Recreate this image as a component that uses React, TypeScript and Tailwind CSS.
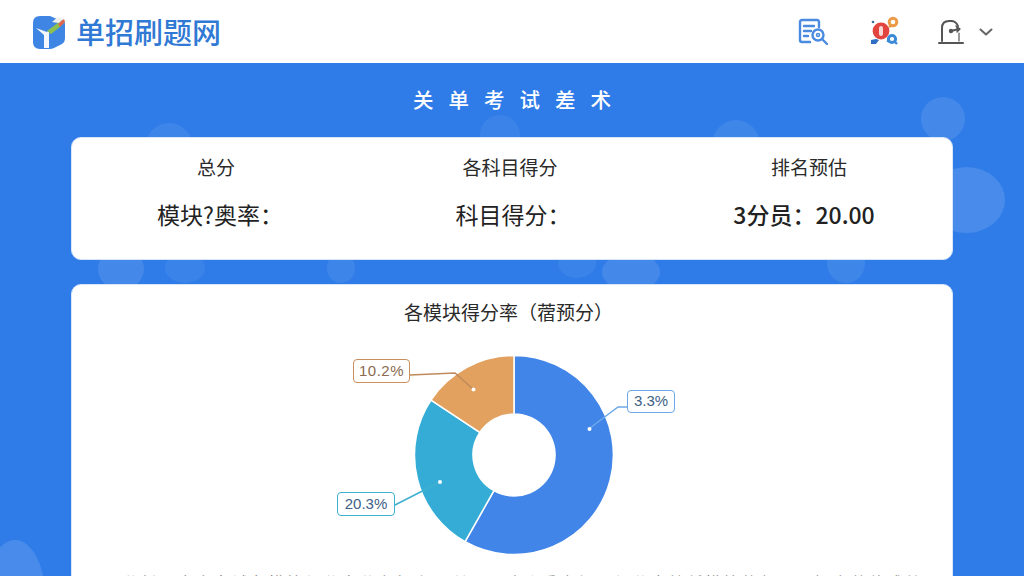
const bubbles = [
  "left-[145px] top-[60px] h-[50px] w-[48px] bg-white/[0.07]",
  "left-[480px] top-[52px] h-[40px] w-[40px] bg-white/[0.06]",
  "left-[98px] top-[185px] h-[42px] w-[46px] bg-white/[0.1]",
  "left-[165px] top-[190px] h-[30px] w-[40px] bg-white/[0.05]",
  "left-[-15px] top-[477px] h-[110px] w-[60px] bg-white/[0.12]",
  "left-[327px] top-[190px] h-[30px] w-[28px] bg-white/[0.07]",
  "left-[558px] top-[185px] h-[30px] w-[38px] bg-white/[0.05]",
  "left-[602px] top-[190px] h-[38px] w-[58px] bg-white/[0.1]",
  "left-[712px] top-[57px] h-[50px] w-[48px] bg-white/[0.08]",
  "left-[827px] top-[180px] h-[40px] w-[38px] bg-white/[0.08]",
  "left-[921px] top-[34px] h-[44px] w-[44px] bg-white/[0.1]",
  "left-[928px] top-[104px] h-[66px] w-[77px] bg-white/[0.12]",
];

const stats = [
  { title: "总分", value: "模块?奥率：", pad: "", valueClass: "pl-[8px]" },
  { title: "各科目得分", value: "科目得分：", pad: "", valueClass: "pl-[6px]" },
  { title: "排名预估", value: "3分员：20.00", pad: "pl-[6px]", valueClass: "pr-[10px] font-medium" },
];

const Logo = () => (
  <svg width="34" height="34" viewBox="0 0 34 34">
    <path d="M7 1h11l7 3 6 1q2 1 2 4v15q0 3-3 5l-8 4q-2 1-4 1h-10q-7 0-7-7V8q0-7 7-7z" fill="#3f86e4" />
    <path d="M4 13l11 4 3-3-1 5v14h-5V20z" fill="#f4f8fd" />
    <path d="M15 16l12-9 4-2-3 7-9 7z" fill="#8cc152" />
    <path d="M20 7l6-5 6 1-5 5z" fill="#f3f0ea" />
    <path d="M26 9l6-5 1 3-5 5z" fill="#e0654f" />
  </svg>
);

const DocSearchIcon = () => (
  <svg width="30" height="28" viewBox="0 0 30 28" fill="none" stroke="#4a8ae0" strokeWidth="2.4" strokeLinecap="round" strokeLinejoin="round">
    <path d="M21 9V4q0-2-2-2H4Q2 2 2 4v18q0 2 2 2h8" />
    <path d="M6 8h10M6 13h7M6 18h4" />
    <circle cx="20" cy="17" r="5.5" />
    <path d="M24.5 21.5L29 26" />
    <circle cx="20" cy="17" r="1.5" strokeWidth="1.5" />
  </svg>
);

const BadgeIcon = () => (
  <svg width="32" height="32" viewBox="0 0 32 32" fill="none">
    <circle cx="5" cy="6" r="1.3" fill="#3d6f9c" />
    <circle cx="25" cy="6" r="3.8" stroke="#ec9a45" strokeWidth="3" />
    <path d="M21 11l3-2" stroke="#ec9a45" strokeWidth="2.4" />
    <circle cx="13" cy="15" r="8.4" fill="#e2453f" />
    <rect x="11" y="10" width="4" height="10" rx="2" fill="#f7d9d6" />
    <circle cx="24" cy="23" r="3.6" stroke="#3a8ad8" strokeWidth="3" />
    <path d="M27 26l2 2M20.5 24l-1 2" stroke="#3a8ad8" strokeWidth="2.4" />
    <path d="M3 28v-4l5-1 3 1-3 4z" fill="#2f6fc4" />
  </svg>
);

const GateIcon = () => (
  <svg width="26" height="26" viewBox="0 0 26 26" fill="none" stroke="#555" strokeWidth="2" strokeLinecap="round" strokeLinejoin="round">
    <path d="M4 22V9q0-7 7-7h2q5 0 7 5" />
    <path d="M1 24h24" />
    <path d="M13 12l8-2" />
    <path d="M18 7l4 3-3 3" fill="#555" strokeWidth="1.4" />
    <path d="M21 14v8" strokeWidth="1.2" />
    <circle cx="13" cy="12" r="1.2" fill="#555" />
  </svg>
);

const Donut = () => (
  <svg width="360" height="210" viewBox="332 350 360 210" fill="none">
    <path d="M514 355.5A99.5 99.5 0 1 1 465.1 541.7L493.9 490.7A41 41 0 1 0 514 414Z" fill="#4285e8" stroke="#fff" strokeWidth="1.5" />
    <path d="M465.1 541.7A99.5 99.5 0 0 1 431 400.1L479.8 432.4A41 41 0 0 0 493.9 490.7Z" fill="#34acd6" stroke="#fff" strokeWidth="1.5" />
    <path d="M431 400.1A99.5 99.5 0 0 1 514 355.5L514 414A41 41 0 0 0 479.8 432.4Z" fill="#e2a15f" stroke="#fff" strokeWidth="1.5" />
    <path d="M410 375l45-2 18 16" stroke="#c08a5a" strokeWidth="1.5" />
    <path d="M627 407h-9l-28 21" stroke="#6ea8ea" strokeWidth="1.5" />
    <path d="M395 505l45-23" stroke="#3fb0d0" strokeWidth="1.5" />
    <circle cx="473.5" cy="389.5" r="2" fill="#fff" />
    <circle cx="589.5" cy="429" r="2" fill="#fff" />
    <circle cx="440" cy="482" r="2" fill="#fff" />
  </svg>
);

export default function App() {
  return (
    <div className="h-[576px] w-[1024px] overflow-hidden bg-[#2f7ce8] font-['Noto_Sans_CJK_SC','Noto_Sans',sans-serif]">
      <header className="flex h-[63px] items-center justify-between bg-white pl-[32px] pr-[31px]">
        <div className="flex items-center gap-[10px]">
          <Logo />
          <span className="text-[29px] font-medium leading-none text-[#3079d4]">单招刷题网</span>
        </div>
        <div className="flex items-center">
          <DocSearchIcon />
          <div className="ml-[40px]"><BadgeIcon /></div>
          <div className="ml-[38px]"><GateIcon /></div>
          <svg className="ml-[15px]" width="14" height="8" viewBox="0 0 14 8" fill="none" stroke="#666" strokeWidth="2" strokeLinecap="round" strokeLinejoin="round">
            <path d="M1.5 1.5L7 6.5l5.5-5" />
          </svg>
        </div>
      </header>

      <main className="relative h-[513px] overflow-hidden px-[71px]">
        {bubbles.map((b) => (
          <div key={b} className={`absolute rounded-[50%] ${b}`} />
        ))}

        <h1 className="relative flex h-[74px] items-center justify-center pb-[2px] pl-[15px] text-[20.5px] font-medium tracking-[15px] text-white">
          关单考试差术
        </h1>

        <section className="relative grid h-[123px] grid-cols-[288px_300px_1fr] rounded-[10px] border border-[#d8e6fa] bg-white pt-[15px] text-center">
          {stats.map((s) => (
            <div key={s.title} className={s.pad}>
              <div className="text-[19px] leading-[28px] text-[#2a2a2a]">{s.title}</div>
              <div className={`mt-[19px] text-[23px] leading-[28px] text-[#222] ${s.valueClass}`}>
                {s.value}
              </div>
            </div>
          ))}
        </section>

        <section className="relative mt-[24px] flex h-[320px] flex-col items-center rounded-[10px] border border-[#d8e6fa] bg-white pt-[13px]">
          <h2 className="mr-[7px] text-[19px] leading-[28px] text-[#2a2a2a]">各模块得分率（蓿预分）</h2>
          <div className="relative mt-[24px] h-[210px] w-[360px]">
            <Donut />
            <span className="absolute left-[21px] top-[9px] flex h-[24px] w-[57px] items-center justify-center rounded-[4px] border-[1.5px] border-[#c98f5e] bg-white font-['Liberation_Sans',sans-serif] text-[15px] tracking-[0.5px] text-[#8a6a50]">10.2%</span>
            <span className="absolute left-[295px] top-[40px] flex h-[23px] w-[48px] items-center justify-center rounded-[4px] border-[1.5px] border-[#6ea8ea] bg-white font-['Liberation_Sans',sans-serif] text-[15px] text-[#3c5f85]">3.3%</span>
            <span className="absolute left-[5px] top-[142px] flex h-[24px] w-[58px] items-center justify-center rounded-[4px] border-[1.5px] border-[#3fb0d0] bg-white font-['Liberation_Sans',sans-serif] text-[15px] text-[#3c5f85]">20.3%</span>
          </div>
          <p className="mt-[10px] w-[815px] whitespace-nowrap text-[16px] leading-[24px] tracking-[2.2px] text-[#777]">
            【分析】本次考试各模块得分率分布如上图所示，建议重点加强得分率较低模块的复习，提高整体成绩。
          </p>
        </section>
      </main>
    </div>
  );
}
